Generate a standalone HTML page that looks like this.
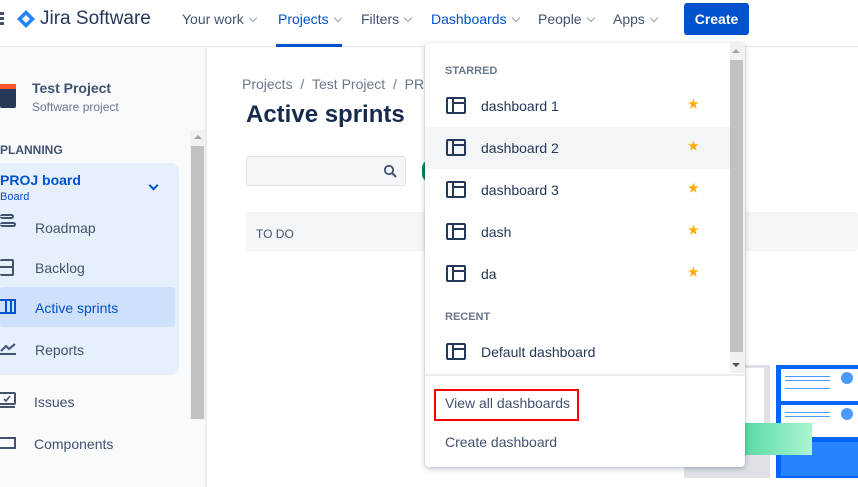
<!DOCTYPE html>
<html><head><style>
*{margin:0;padding:0;box-sizing:border-box}
body{width:858px;height:487px;overflow:hidden;position:relative;font-family:"Liberation Sans",sans-serif;background:#fff;color:#172b4d}
.a{position:absolute}
.nav{font-size:14px;color:#42526e;top:11px}
.chev{display:inline-block;width:6px;height:6px;border-right:1.5px solid #97a0af;border-bottom:1.5px solid #97a0af;transform:rotate(45deg);margin-left:6px;position:relative;top:-3px}
.si{font-size:14px;color:#42526e}
.di{position:absolute;left:0;width:305px;height:42px}
.di span{position:absolute;left:56px;top:13px;font-size:14px;color:#253858}
.ic{position:absolute;left:21px;top:12px;width:20px;height:17px;border:2px solid #253858;border-radius:2px}
.ic:before{content:"";position:absolute;left:4px;top:0;width:2px;height:13px;background:#253858}
.ic:after{content:"";position:absolute;left:6px;top:3px;width:10px;height:2px;background:#253858}
.st{position:absolute;left:263px;top:12px;color:#ffab00;font-size:12px}
</style></head><body>
<!-- top nav -->
<div class="a" style="left:0;top:0;width:858px;height:47px;border-bottom:1px solid #e4e6ea;background:#fff"></div>
<div class="a" style="left:0;top:12px;width:4px;height:3px;background:#42526e;box-shadow:0 5px 0 #42526e,0 10px 0 #42526e"></div>
<svg class="a" style="left:17px;top:10px" width="18" height="18" viewBox="0 0 18 18"><path d="M9 0L18 9 9 18 0 9z" fill="#2684ff"/><path d="M9 5L13 9 9 13 5 9z" fill="#fff"/></svg>
<div class="a" style="left:40px;top:8px;font-size:19px;color:#253858">Jira Software</div>
<div class="a nav" style="left:182px">Your work<i class="chev"></i></div>
<div class="a nav" style="left:278px;color:#0052cc">Projects<i class="chev"></i></div>
<div class="a" style="left:276px;top:44px;width:66px;height:3px;background:#0052cc"></div>
<div class="a nav" style="left:361px">Filters<i class="chev"></i></div>
<div class="a nav" style="left:431px;color:#0052cc">Dashboards<i class="chev"></i></div>
<div class="a nav" style="left:538px">People<i class="chev"></i></div>
<div class="a nav" style="left:613px">Apps<i class="chev"></i></div>
<div class="a" style="left:684px;top:3px;width:65px;height:32px;background:#0052cc;border-radius:3px;color:#fff;font-size:14px;font-weight:bold;text-align:center;line-height:32px">Create</div>
<!-- sidebar -->
<div class="a" style="left:0;top:48px;width:207px;height:439px;background:#f8fafc;border-right:2px solid #ebecf0"></div>
<div class="a" style="left:0;top:84px;width:16px;height:24px;background:#253858;border-radius:2px"></div>
<div class="a" style="left:0;top:84px;width:16px;height:5px;background:#ff5630"></div>
<div class="a" style="left:32px;top:80px;font-size:14px;font-weight:bold;color:#42526e">Test Project</div>
<div class="a" style="left:32px;top:100px;font-size:12px;color:#6b778c">Software project</div>
<div class="a" style="left:0;top:143px;font-size:12px;font-weight:bold;color:#42526e">PLANNING</div>
<div class="a" style="left:-10px;top:163px;width:189px;height:212px;background:#e6effc;border-radius:8px"></div>
<div class="a" style="left:0;top:172px;font-size:14px;font-weight:bold;color:#0052cc">PROJ board</div>
<div class="a" style="left:0;top:191px;font-size:11px;color:#0052cc">Board</div>
<div class="a" style="left:150px;top:182px;width:7px;height:7px;border-right:2px solid #0052cc;border-bottom:2px solid #0052cc;transform:rotate(45deg)"></div>
<div class="a" style="left:0;top:287px;width:175px;height:40px;background:#cfe0fb;border-radius:3px"></div>
<div class="a" style="left:0;top:214px;width:14px;height:5px;border:2px solid #42526e;border-left:none;border-radius:3px"></div>
<div class="a" style="left:0;top:222px;width:16px;height:5px;border:2px solid #42526e;border-left:none;border-radius:3px"></div>
<div class="a" style="left:0;top:259px;width:14px;height:17px;border:2px solid #42526e;border-left:none;border-radius:2px"></div>
<div class="a" style="left:0;top:266px;width:14px;height:2px;background:#42526e"></div>
<div class="a" style="left:0;top:299px;width:16px;height:15px;border:2px solid #0052cc;border-left:none"></div>
<div class="a" style="left:5px;top:299px;width:2px;height:15px;background:#0052cc;box-shadow:5px 0 0 #0052cc"></div>
<svg class="a" style="left:0;top:342px" width="17" height="14"><path d="M1 9L6 4 9 7 15 2" stroke="#42526e" stroke-width="2" fill="none"/><path d="M0 12H16" stroke="#42526e" stroke-width="2"/></svg>
<svg class="a" style="left:0;top:392px" width="17" height="18"><rect x="-2" y="1" width="17" height="11" rx="1" stroke="#42526e" stroke-width="2" fill="none"/><path d="M4 7L6 9 10 4" stroke="#42526e" stroke-width="1.6" fill="none"/><path d="M0 15H15" stroke="#42526e" stroke-width="2"/></svg>
<svg class="a" style="left:0;top:436px" width="17" height="14"><rect x="-2" y="2" width="17" height="10" stroke="#42526e" stroke-width="2" fill="none"/></svg>
<div class="a si" style="left:35px;top:220px">Roadmap</div>
<div class="a si" style="left:35px;top:260px">Backlog</div>
<div class="a si" style="left:35px;top:300px;color:#0052cc">Active sprints</div>
<div class="a si" style="left:35px;top:342px">Reports</div>
<div class="a si" style="left:34px;top:394px">Issues</div>
<div class="a si" style="left:34px;top:436px">Components</div>
<div class="a" style="left:190px;top:130px;width:15px;height:290px;background:#f1f1f1"></div>
<div class="a" style="left:191px;top:146px;width:13px;height:273px;background:#c1c1c1"></div>
<div class="a" style="left:194px;top:135px;border:4px solid transparent;border-bottom:4px solid #a3a3a3;border-top:none"></div>
<!-- main -->
<div class="a" style="left:242px;top:76px;font-size:14px;color:#6b778c">Projects &nbsp;/ &nbsp;Test Project &nbsp;/ &nbsp;PR</div>
<div class="a" style="left:246px;top:101px;font-size:24px;font-weight:bold;color:#172b4d">Active sprints</div>
<div class="a" style="left:246px;top:156px;width:160px;height:30px;background:#f4f5f7;border:1px solid #dfe1e6;border-radius:3px"></div>
<svg class="a" style="left:383px;top:164px" width="14" height="14"><circle cx="6" cy="6" r="4.2" stroke="#42526e" stroke-width="1.8" fill="none"/><path d="M9 9L13 13" stroke="#42526e" stroke-width="2"/></svg>
<div class="a" style="left:422px;top:160px;width:8px;height:22px;background:#00875a;border-radius:8px 0 0 8px"></div>
<div class="a" style="left:246px;top:212px;width:612px;height:39px;background:#f4f5f7;border-radius:3px"></div>
<div class="a" style="left:256px;top:227px;font-size:12px;color:#42526e">TO DO</div>
<!-- illustration -->
<div class="a" style="left:684px;top:365px;width:86px;height:113px;background:#dfe1e6"></div>
<div class="a" style="left:690px;top:368px;width:74px;height:40px;background:#fff"></div>
<div class="a" style="left:690px;top:408px;width:74px;height:18px;background:#fff"></div>
<div class="a" style="left:776px;top:365px;width:82px;height:113px;background:#0065ff"></div>
<div class="a" style="left:781px;top:369px;width:77px;height:32px;background:#fff"></div>
<div class="a" style="left:781px;top:405px;width:77px;height:32px;background:#fff"></div>
<div class="a" style="left:785px;top:376px;width:45px;height:1px;background:#4c9aff;box-shadow:0 4px 0 #4c9aff,0 12px 0 #4c9aff"></div>
<div class="a" style="left:785px;top:412px;width:45px;height:1px;background:#4c9aff;box-shadow:0 4px 0 #4c9aff"></div>
<div class="a" style="left:841px;top:372px;width:12px;height:12px;border-radius:50%;background:#4c9aff"></div>
<div class="a" style="left:841px;top:408px;width:12px;height:12px;border-radius:50%;background:#4c9aff"></div>
<div class="a" style="left:781px;top:442px;width:77px;height:34px;background:#2684ff"></div>
<div class="a" style="left:742px;top:423px;width:70px;height:32px;background:linear-gradient(90deg,#57d9a3,#abf5d1)"></div>
<!-- dropdown -->
<div class="a" style="left:425px;top:43px;width:320px;height:424px;background:#fff;border-radius:4px;box-shadow:0 2px 6px rgba(9,30,66,.25),0 0 1px rgba(9,30,66,.3)">
 <div class="a" style="left:305px;top:0;width:15px;height:330px;background:#f1f1f1"></div>
 <div class="a" style="left:305px;top:17px;width:13px;height:292px;background:#c1c1c1"></div>
 <div class="a" style="left:307px;top:6px;border:4px solid transparent;border-bottom:4px solid #a3a3a3;border-top:none"></div>
 <div class="a" style="left:307px;top:320px;border:4px solid transparent;border-top:4px solid #505050;border-bottom:none"></div>
 <div class="a" style="left:20px;top:22px;font-size:11px;font-weight:bold;color:#6b778c">STARRED</div>
 <div class="di" style="top:42px"><i class="ic"></i><span>dashboard 1</span><b class="st">★</b></div>
 <div class="di" style="top:84px;background:#f4f5f7"><i class="ic"></i><span>dashboard 2</span><b class="st">★</b></div>
 <div class="di" style="top:126px"><i class="ic"></i><span>dashboard 3</span><b class="st">★</b></div>
 <div class="di" style="top:168px"><i class="ic"></i><span>dash</span><b class="st">★</b></div>
 <div class="di" style="top:210px"><i class="ic"></i><span>da</span><b class="st">★</b></div>
 <div class="a" style="left:20px;top:268px;font-size:11px;font-weight:bold;color:#6b778c">RECENT</div>
 <div class="di" style="top:288px"><i class="ic"></i><span>Default dashboard</span></div>
 <div class="a" style="left:0;top:331px;width:320px;height:2px;background:#ebecf0"></div>
 <div class="a" style="left:9px;top:346px;width:145px;height:32px;border:2px solid #f00"></div>
 <div class="a" style="left:20px;top:352px;font-size:14px;color:#42526e">View all dashboards</div>
 <div class="a" style="left:20px;top:391px;font-size:14px;color:#42526e">Create dashboard</div>
</div>
</body></html>
